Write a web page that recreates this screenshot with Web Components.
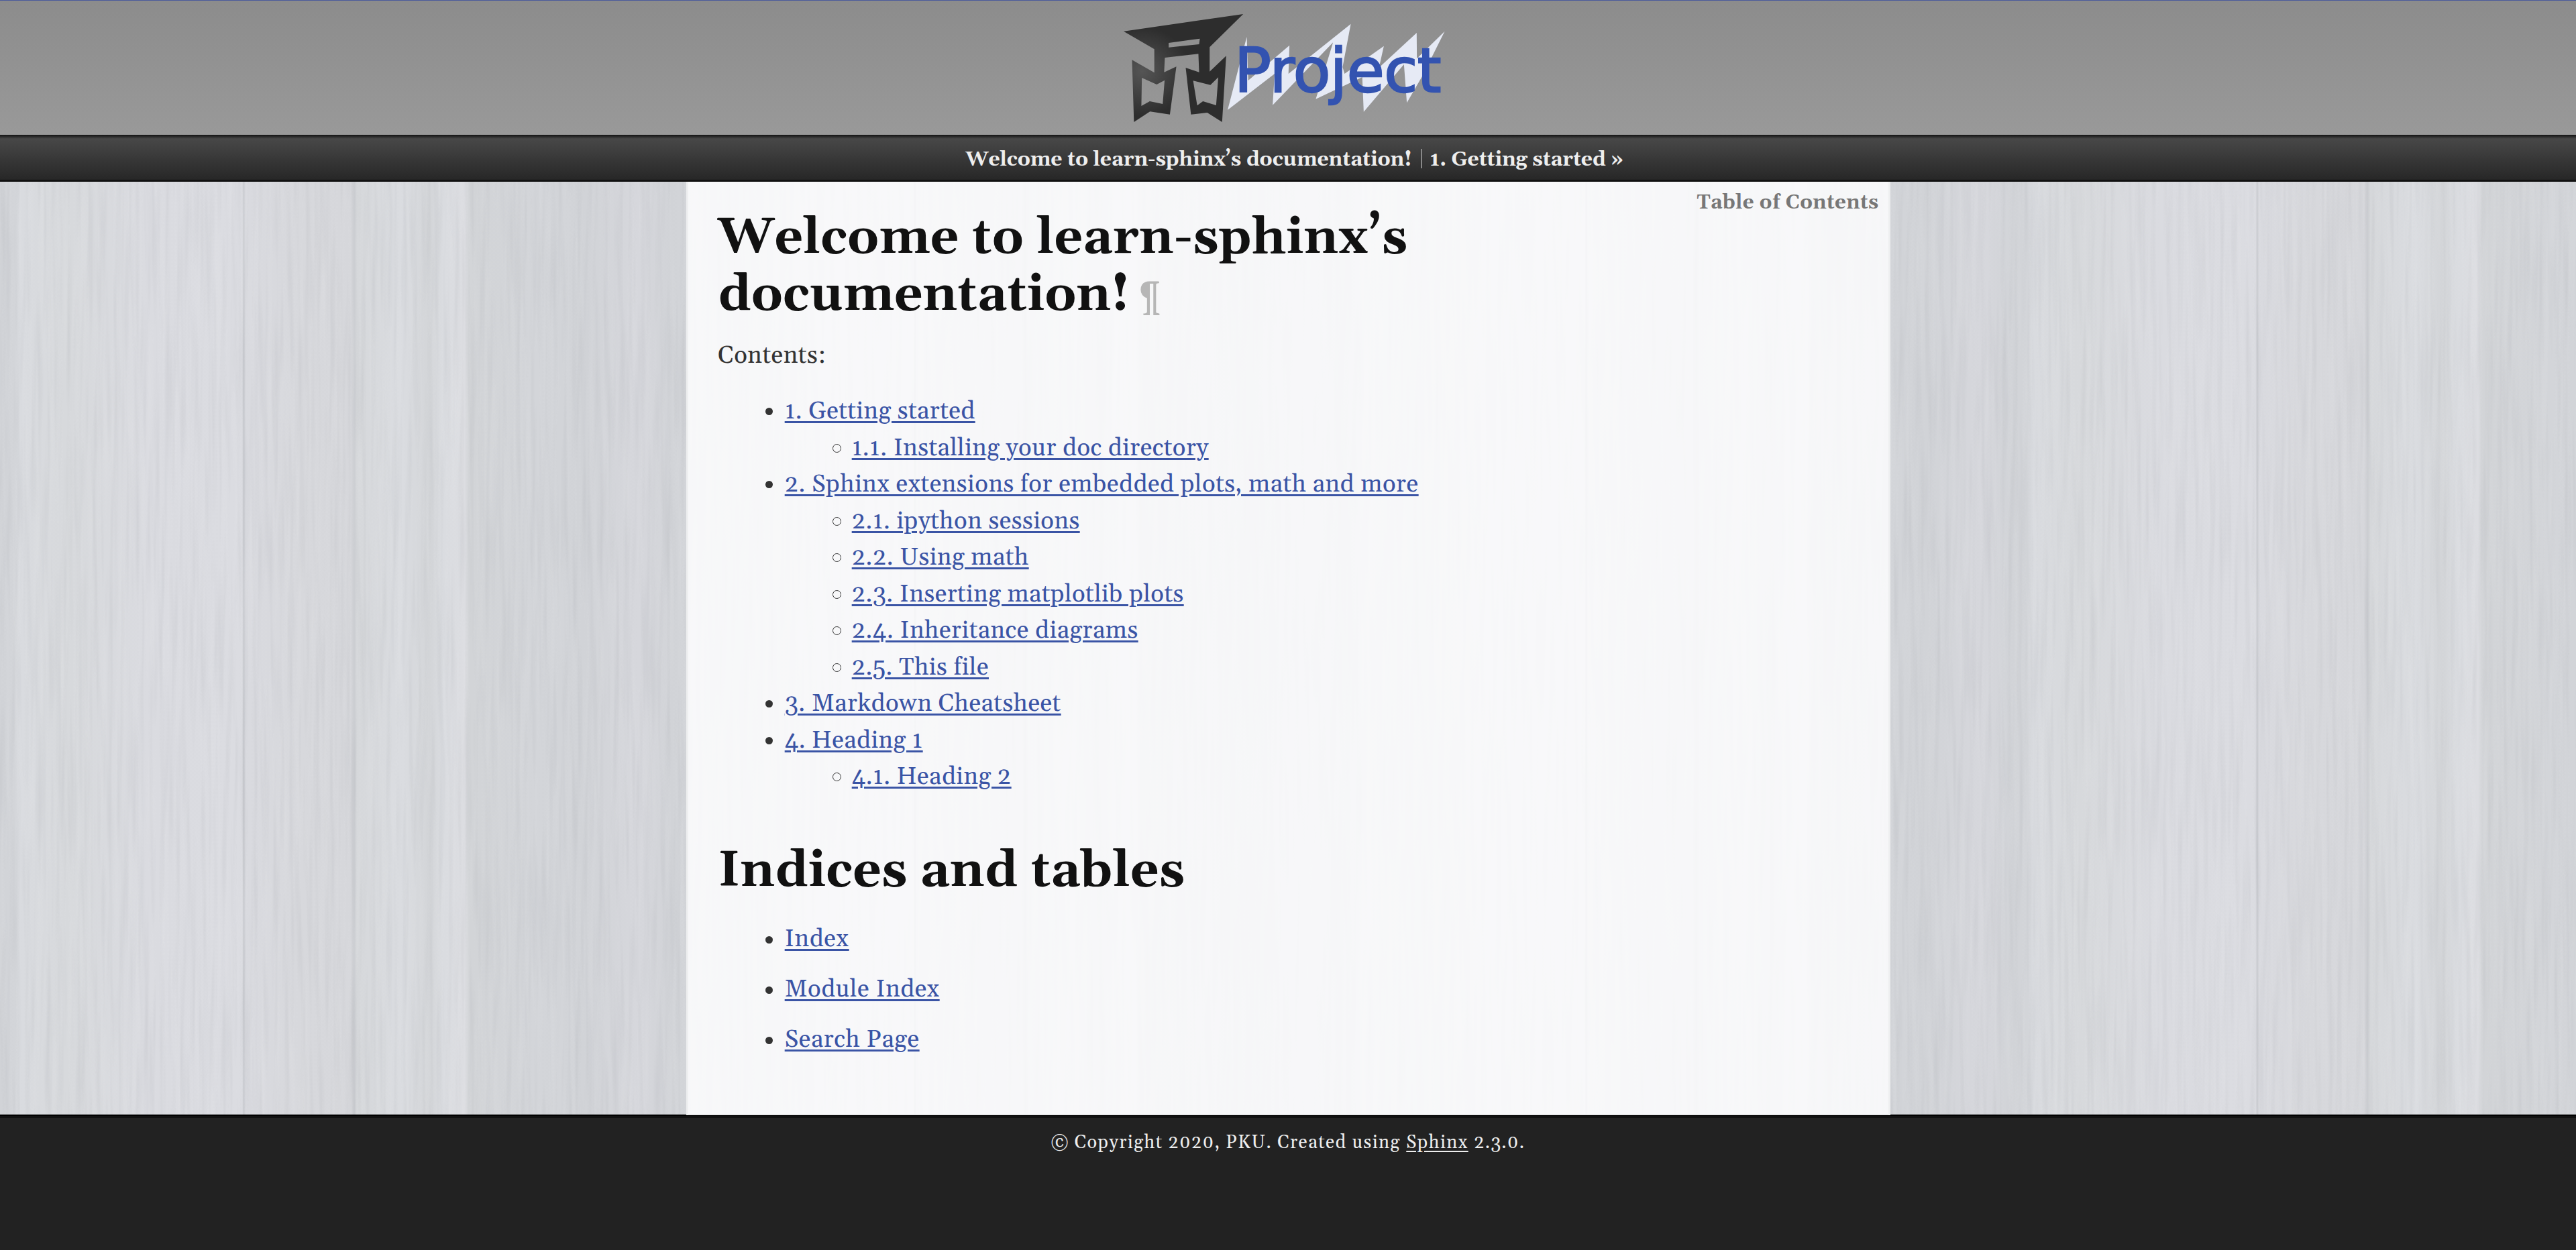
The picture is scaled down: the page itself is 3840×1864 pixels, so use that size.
<!DOCTYPE html>
<html lang="en">
<head>
<meta charset="utf-8">
<title>Welcome to learn-sphinx’s documentation!</title>
<style>
html,body{margin:0;height:100%}
body{font-family:Gelasio,"Liberation Serif",serif;color:#333;background:#222;overflow:hidden}
</style>
</head>
<body>
<sphinx-page>
  <project-logo slot="header">Project</project-logo>
  <fit-text slot="nav" w="665">Welcome to learn-sphinx’s documentation!</fit-text>
  <fit-text slot="nav2" w="288">1. Getting started »</fit-text>
  <page-title first><fit-text w="1028">Welcome to learn-sphinx’s</fit-text><br><fit-text w="614">documentation!</fit-text><fit-text w="32" style="color:#b6b6b6;font-weight:400;font-size:60px;line-height:60px;margin-left:15px">¶</fit-text></page-title>
  <fit-text w="161" style="display:block;font-size:36.5px;line-height:54.5px;margin-top:20.2px">Contents:</fit-text>
  <doc-list style="margin-top:29px">
    <doc-item w="284">1. Getting started</doc-item>
    <doc-item level="2" w="532">1.1. Installing your doc directory</doc-item>
    <doc-item w="945">2. Sphinx extensions for embedded plots, math and more</doc-item>
    <doc-item level="2" w="340">2.1. ipython sessions</doc-item>
    <doc-item level="2" w="264">2.2. Using math</doc-item>
    <doc-item level="2" w="495">2.3. Inserting matplotlib plots</doc-item>
    <doc-item level="2" w="427">2.4. Inheritance diagrams</doc-item>
    <doc-item level="2" w="203">2.5. This file</doc-item>
    <doc-item w="412">3. Markdown Cheatsheet</doc-item>
    <doc-item w="206">4. Heading 1</doc-item>
    <doc-item level="2" w="238">4.1. Heading 2</doc-item>
  </doc-list>
  <page-title><fit-text w="696">Indices and tables</fit-text></page-title>
  <doc-list style="margin-top:31.5px;gap:20.5px">
    <doc-item w="96">Index</doc-item>
    <doc-item w="231">Module Index</doc-item>
    <doc-item w="201">Search Page</doc-item>
  </doc-list>
  <fit-text slot="toc" w="271">Table of Contents</fit-text>
  <fit-text slot="footer" w="521">© Copyright 2020, PKU. Created using</fit-text>
  <fit-text slot="footer" w="92.5" underline>Sphinx</fit-text>
  <fit-text slot="footer" w="76">2.3.0.</fit-text>
</sphinx-page>
<script>
const define = (name, html, setup) => customElements.define(name, class extends HTMLElement {
  constructor() {
    super();
    this.attachShadow({mode: 'open'}).innerHTML = html;
  }
  connectedCallback() { if (setup) setup(this, this.shadowRoot); }
});

// Tracks the letters of a run so that it takes the advance given in "w".
const fitRun = (el, run) => {
  const w = +el.getAttribute('w');
  const n = el.textContent.length;
  const fit = () => {
    run.style.letterSpacing = '0px';
    const natural = run.getBoundingClientRect().width;
    run.style.letterSpacing = (w - natural) / n + 'px';
  };
  fit();
  requestAnimationFrame(fit);
};

define('wood-grain', `<style>:host{display:block;overflow:hidden}svg{display:block;width:100%;height:100%}</style>
<svg width="3840" height="1392">
  <defs>
    <linearGradient id="plank" x1="0" x2="1">
      <stop offset="0" stop-color="#d1d3d7"/><stop offset=".022" stop-color="#d3d5d9"/>
      <stop offset=".03" stop-color="#d9dbdf"/><stop offset=".1" stop-color="#d7d9dc"/>
      <stop offset=".22" stop-color="#dadbe0"/><stop offset=".355" stop-color="#dbdce1"/>
      <stop offset=".361" stop-color="#dadbe0"/><stop offset=".363" stop-color="#c6c8cd"/>
      <stop offset=".366" stop-color="#d9dadf"/><stop offset=".45" stop-color="#d7d8dc"/>
      <stop offset=".522" stop-color="#d6d7db"/><stop offset=".528" stop-color="#cbcdd1"/>
      <stop offset=".532" stop-color="#d6d8db"/><stop offset=".6" stop-color="#dadce0"/>
      <stop offset=".64" stop-color="#d3d5d8"/><stop offset=".66" stop-color="#dadce0"/>
      <stop offset=".692" stop-color="#dcdde1"/><stop offset=".699" stop-color="#d2d4d7"/>
      <stop offset=".8" stop-color="#d3d5d9"/><stop offset=".87" stop-color="#d1d3d7"/>
      <stop offset=".95" stop-color="#d6d7dc"/><stop offset="1" stop-color="#d1d3d7"/>
    </linearGradient>
    <pattern id="planks" width="1000.5" height="1392" patternUnits="userSpaceOnUse"><rect width="1000.5" height="1392" fill="url(#plank)"/></pattern>
    <filter id="grain" x="0" y="0" width="100%" height="100%" color-interpolation-filters="sRGB">
      <feTurbulence type="fractalNoise" baseFrequency="0.13 0.005" numOctaves="2" seed="8"/>
      <feColorMatrix values="0 0 0 0 .42  0 0 0 0 .43  0 0 0 0 .46  .9 0 0 0 -.39"/>
    </filter>
    <filter id="shine" x="0" y="0" width="100%" height="100%" color-interpolation-filters="sRGB">
      <feTurbulence type="fractalNoise" baseFrequency="0.1 0.004" numOctaves="2" seed="21"/>
      <feColorMatrix values="0 0 0 0 1  0 0 0 0 1  0 0 0 0 1  1.2 0 0 0 -.55"/>
    </filter>
  </defs>
  <rect width="3840" height="1392" fill="url(#planks)"/>
  <rect width="3840" height="1392" filter="url(#grain)" opacity=".19"/>
  <rect width="3840" height="1392" filter="url(#shine)" opacity=".15"/>
</svg>`);

define('fit-text', `<style>:host{display:inline-block;white-space:nowrap}
:host([underline]) span{text-decoration:underline;text-decoration-thickness:2px;text-underline-offset:4px}</style><span><slot></slot></span>`,
  (el, root) => fitRun(el, root.querySelector('span')));

define('page-title', `<style>
:host{display:block;font-size:74.5px;line-height:84.7px;font-weight:700;color:#111;margin-top:71.7px}
:host([first]){margin-top:42px}</style><slot></slot>`);

define('doc-list', `<style>:host{display:flex;flex-direction:column}</style><slot></slot>`);

define('doc-item', `<style>
:host{display:flex;align-items:center;height:54.5px;padding-left:70.5px;font-size:36.5px;line-height:54.5px}
:host([level="2"]){padding-left:170.5px}
i{box-sizing:border-box;flex:none;width:11px;height:11px;border-radius:50%;background:#333;margin:1px 18px 0 0}
:host([level="2"]) i{width:13px;height:13px;margin-right:16px;background:none;border:1.5px solid #333}
a{color:#3a54a5;text-decoration:underline;text-decoration-thickness:3px;text-underline-offset:4px;white-space:nowrap}
</style><i></i><a><slot></slot></a>`, (el, root) => fitRun(el, root.querySelector('a')));

define('project-logo', `<style>
:host{display:grid;width:560px;height:200px}
svg,span{grid-area:1/1}
span{font:91px/200px "DejaVu Sans",sans-serif;color:#3353b0;padding:6px 0 0 200px;letter-spacing:-.5px;-webkit-text-stroke:2.4px #3353b0;white-space:nowrap}
</style>
<svg width="560" height="200" viewBox="0 0 1568 600" preserveAspectRatio="none">
  <defs><radialGradient id="ink" gradientUnits="userSpaceOnUse" cx="175" cy="320" r="200"><stop offset="0" stop-color="#555"/><stop offset="1" stop-color="#2d2d2d"/></radialGradient></defs>
  <path fill="url(#ink)" fill-rule="evenodd" d="M98 140L597 63L457 211V320L526 250L509 546L447 504L379 512L357 303L413 323L410 241L270 258L267 323L318 298L291 512L208 499L141 546L133 268L226 325V220ZM286 192V212L413 198L416 173ZM174 348L172 474L207 453L261 465L269 359L236 378ZM388 361L405 472L429 453L484 471L493 346L460 380Z"/>
  <path fill="#e6eaf5" d="M532 492L580 295L612 165L618 360L790 203L786 330L1046 107L1012 300L1020 330L1184 206L1164 302L1321 147L1322 262L1438 140L1345 340L1280 460L1268 288L1100 500L1094 345L900 443L972 190L720 470L728 330Z"/>
</svg><span><slot></slot></span>`);

define('sphinx-page', `<style>
:host{display:flex;flex-direction:column;height:1864px;width:3840px}
header{box-sizing:border-box;height:201px;border-top:1.5px solid #4a5a9c;background:linear-gradient(#8c8c8c,#999);display:flex;padding-left:1640px}
header ::slotted(*){margin-top:-1px}
nav{box-sizing:border-box;height:70px;border-bottom:3px solid #111;background:linear-gradient(#111,rgba(17,17,17,0) 6px),linear-gradient(#4b4b4b,#272727);display:flex;align-items:center;padding-left:1439.5px;font-size:30.2px;line-height:70px;font-weight:700;color:#eee;white-space:nowrap}
nav>div{display:flex;align-items:center;padding-top:7px}
nav i{width:2px;height:29px;background:#888;margin:-4px 12px 0 13px}
.body{display:grid;height:1391px;grid-template-columns:3840px}
wood-grain,.wrap{grid-area:1/1;height:1391px}
.wrap{display:flex;justify-content:center}
main{position:relative;box-sizing:border-box;width:1795px;height:1392px;background:rgba(253,253,254,.85);border:solid #eeeff0;border-width:0 3px;display:flex;justify-content:space-between;padding:0 14px 0 44.7px}
aside{font-size:29.5px;line-height:64px;font-weight:700;color:#777}
article{width:1200px;display:flow-root}
footer{flex:1;background:#222;border-top:2.5px solid #000;box-shadow:inset 0 3px #111;color:#eee;font-size:27.2px;line-height:81px;display:flex;justify-content:center;gap:8.5px}
</style>
<header><slot name="header"></slot></header>
<nav><div><slot name="nav"></slot><i></i><slot name="nav2"></slot></div></nav>
<div class="body"><wood-grain></wood-grain><div class="wrap"><main><article><slot></slot></article><aside><slot name="toc"></slot></aside></main></div></div>
<footer><slot name="footer"></slot></footer>`);
</script>
</body>
</html>
